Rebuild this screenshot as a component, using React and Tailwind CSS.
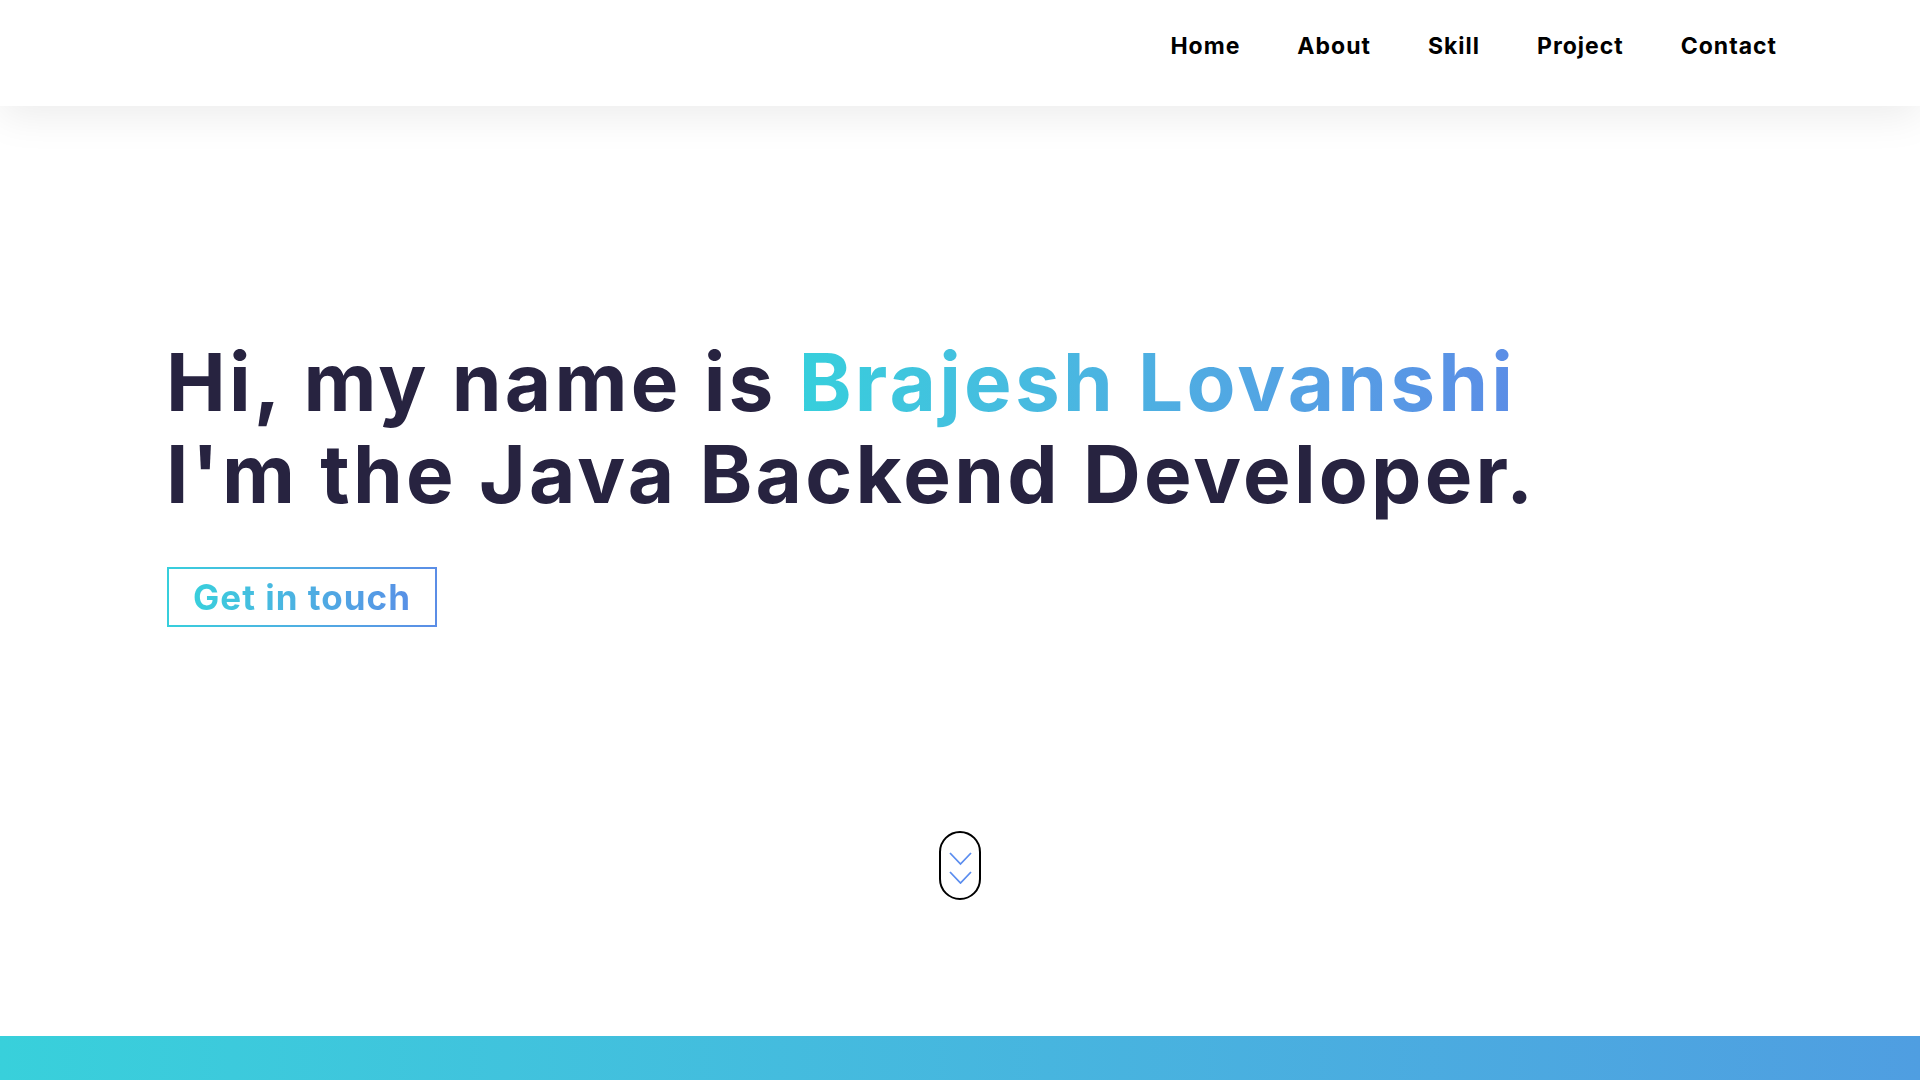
import React from "react";

export default function App() {
  const font = { fontFamily: "Inter, 'Open Sans', sans-serif" };
  return (
    <div className="w-[1920px] h-[1080px] overflow-hidden bg-white" style={font}>
      <header className="relative z-10 h-[106px] bg-white shadow-[0_10px_40px_rgba(0,0,0,0.08)] flex items-center justify-end pr-[143px] pb-[14px]">
        <nav className="flex items-center gap-[57px] text-[23px] font-bold text-black tracking-[1px]">
          <a>Home</a>
          <a>About</a>
          <a>Skill</a>
          <a>Project</a>
          <a>Contact</a>
        </nav>
      </header>
      <main className="relative h-[930px] flex flex-col">
        <div className="pl-[166px] pt-[230px]">
          <h1 className="text-[80px] leading-[92px] font-bold text-[#272340] tracking-[3.2px]">
            <span className="block">
              Hi, my name is{" "}
              <span className="bg-gradient-to-r from-[#36cfdc] to-[#5b8de6] bg-clip-text text-transparent">
                Brajesh Lovanshi
              </span>
            </span>
            <span className="block">I'm the Java Backend Developer.</span>
          </h1>
          <div className="mt-[47px] ml-[1px]">
            <div className="inline-block p-[2px] bg-gradient-to-r from-[#36cfdc] to-[#5b8de6]">
              <div className="bg-white w-[266px] h-[56px] flex items-center justify-center">
                <span className="text-[35px] font-bold tracking-[1px] bg-gradient-to-r from-[#38cfdc] to-[#5890e6] bg-clip-text text-transparent">
                  Get in touch
                </span>
              </div>
            </div>
          </div>
        </div>
        <div className="absolute left-[939px] top-[725px] w-[42px] h-[69px] rounded-full border-2 border-black flex flex-col items-center justify-center">
          <svg className="mt-[4px]" width="23" height="32" viewBox="0 0 23 32" fill="none" stroke="#5b8def" strokeWidth="1.8">
            <path d="M1 1 L11.5 12 L22 1" />
            <path d="M1 20 L11.5 31 L22 20" />
          </svg>
        </div>
      </main>
      <section className="h-[44px] bg-gradient-to-r from-[#38d0db] to-[#4f9ee1]" />
    </div>
  );
}
